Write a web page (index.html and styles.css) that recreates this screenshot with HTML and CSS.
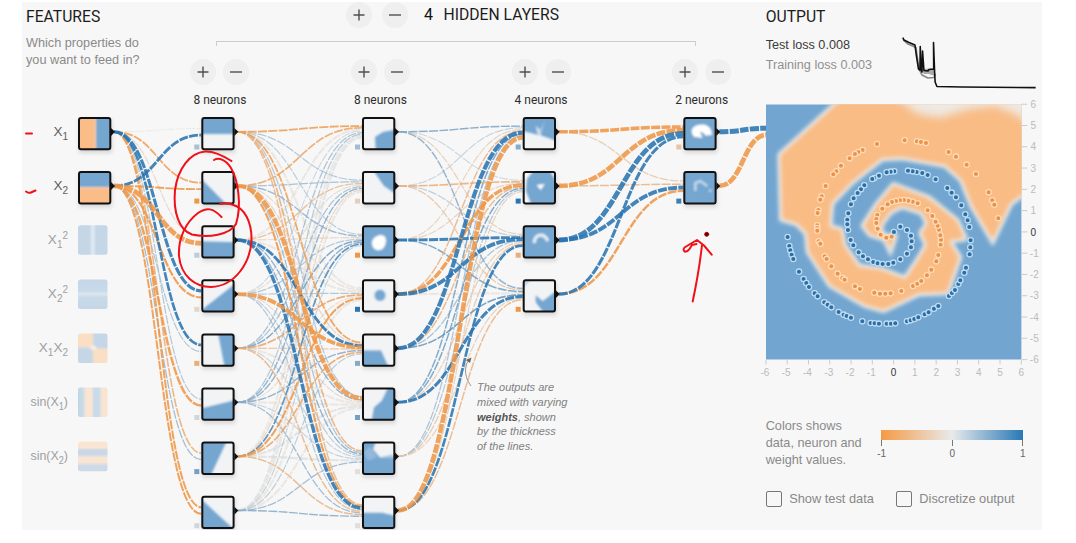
FILE: index.html
```html
<!DOCTYPE html>
<html lang="en">
<head>
<meta charset="utf-8">
<title>Neural network playground</title>
<link rel="stylesheet" href="styles.css">
</head>
<body>
<main class="playground">
  <svg class="network" id="network" viewBox="22 2 1020 528" width="1020" height="528"></svg>

  <section class="features">
    <h2 class="title">FEATURES</h2>
    <p class="hint">Which properties do<br>you want to feed in?</p>
  </section>

  <section class="hidden">
    <div class="layer-head">
      <span class="btn"><svg viewBox="0 0 12 12"><path d="M6 0.5v11M0.5 6h11"/></svg></span>
      <span class="btn"><svg viewBox="0 0 12 12"><path d="M0 6h12"/></svg></span>
      <span class="count">4</span>
      <h2 class="title">HIDDEN LAYERS</h2>
    </div>
    <div class="bracket"></div>
    <div class="layers" id="layers"></div>
    <p class="callout">The outputs are<br>mixed with varying<br><b>weights</b>, shown<br>by the thickness<br>of the lines.</p>
  </section>

  <section class="output">
    <div class="output-head">
      <div>
        <h2 class="title">OUTPUT</h2>
        <p class="loss test">Test loss 0.008</p>
        <p class="loss">Training loss 0.003</p>
      </div>
      <svg class="chart" viewBox="0 0 140 56" width="140" height="56">
        <path class="train" d="M1.500 4L6 8L14 11.500L17 33L20 39L26 42L32 41.500L33.500 38"/>
        <path class="fuzz" d="M17.500 33L33 32.500L33 40L27 38L22 38Z"/>
        <path class="test" d="M.8 1.500L2 4L7 6.500L13 9L14.500 20L16.500 33L18 34L18.300 10.500L19.200 34L20 36L20.600 15L22 34.500L26 35L27 33.500L31.800 33L31.600 6.500L32.700 36L33.200 46L35 50.500L60 51L134 51.700"/>
      </svg>
    </div>
    <svg class="heatmap" id="heatmap" viewBox="765.700 100 276 285" width="276" height="285"></svg>
    <div class="legend">
      <p class="hint">Colors shows<br>data, neuron and<br>weight values.</p>
      <div class="scale">
        <div class="bar"></div>
        <div class="ticks"><i></i><i></i><i></i></div>
        <div class="nums"><span>-1</span><span>0</span><span>1</span></div>
      </div>
    </div>
    <div class="options">
      <label><span class="box"></span>Show test data</label>
      <label><span class="box"></span>Discretize output</label>
    </div>
  </section>

  <svg class="ink" viewBox="22 2 1020 528" width="1020" height="528">
    <path d="M26 133.500H32M26 191.500Q29 193.500 31 192.500T35.500 190.500"/>
    <path d="M231.500 161C222 155 213 151 205 151.500C190 153 178 168 175 190C173 212 179 230 192 234.500C208 238 230 235 236 224C242 205 238 180 231 168C226 160 219 157 214 160"/>
    <path d="M221.500 217C213 208 207 207 198 213C186 222 178 238 179 256C181 276 195 287 211 287C236 286 250 262 251.500 241C252 222 245 208 232 204.500C228 203 224 203 220 204"/>
    <path d="M692.700 301.500C697 281 700 263 702 245M711.700 254.700L704 245.500L697 240L691 243.500L684.500 247.500Q682.500 250 685 251.800Q688 251.500 689.500 249L692 245L696.500 244"/>
    <circle cx="706.700" cy="234.300" r="2"/>
  </svg>
</main>
<script src="app.js"></script>
</body>
</html>
```
FILE: styles.css
```css
body { margin: 0; background: #fff; font-family: "Liberation Sans", Arial, sans-serif; }
p, h2 { margin: 0; }

.playground {
  position: relative;
  display: grid;
  grid-template-columns: 168px 575.7px 276.3px;
  width: 1020px;
  height: 528px;
  margin: 2px 0 0 22px;
  background: #f7f7f7;
  overflow: hidden;
}
.network, .ink { position: absolute; left: 0; top: 0; }
.features, .hidden, .output { position: relative; }

.title { font: 400 15.7px/18px Roboto, sans-serif; color: #1c1c1c; white-space: nowrap; }
.hint { font-size: 12.7px; line-height: 17px; color: #8a8a8a; white-space: nowrap; }

.features { padding: 6px 0 0 4px; }
.features .hint { margin-top: 9px; }

.layer-head { display: flex; align-items: center; height: 26px; padding-left: 156px; }
.btn {
  display: flex; align-items: center; justify-content: center;
  width: 26px; height: 26px; border-radius: 50%; background: #efefef;
}
.btn svg { width: 12px; height: 12px; fill: none; stroke: #505050; stroke-width: 1.4; }
.layer-head .btn + .btn { margin-left: 10px; }
.count { width: 19.500px; margin-left: 16px; font: 400 16px/18px Roboto, sans-serif; color: #111; }
.bracket { width: 478px; height: 4px; margin: 13px 0 0 26px; border: 1px solid #ccc; border-bottom: 0; }
.layers { display: flex; gap: 101.6px; margin: 13px 0 0 0.4px; }
.layer { flex: none; width: 59px; }
.layer .row { display: flex; justify-content: space-between; }
.layer p { margin-top: 6.5px; text-align: center; font: 400 12px/17px Roboto, sans-serif; color: #2c2c2c; white-space: nowrap; }
.callout {
  position: absolute; left: 287px; top: 378px;
  font-size: 11px; line-height: 14.8px; font-style: italic; color: #808080; white-space: nowrap;
}
.callout b { color: #555; }

.output { padding-top: 6px; }
.output-head { display: flex; height: 92px; }
.output-head > div { width: 137px; }
.loss { font-size: 12.65px; line-height: 20px; color: #909090; white-space: nowrap; }
.loss.test { margin-top: 9px; color: #3a3a3a; }
.chart { margin-top: 28px; fill: none; stroke-linejoin: round; }
.chart .test { stroke: #111; stroke-width: 1.6; }
.chart .train { stroke: #888; stroke-width: 1.6; }
.chart .fuzz { fill: #777; opacity: .6; }
.heatmap { display: block; overflow: visible; }

.legend { display: flex; height: 51px; margin-top: 33px; }
.legend .hint { width: 115.500px; }
.scale { width: 142px; padding-top: 12px; }
.bar { height: 10px; background: linear-gradient(90deg, #f59a44, #e8eaeb 50%, #2878b5); }
.ticks { display: flex; justify-content: space-between; height: 6px; }
.ticks i { width: 1px; background: #777; }
.nums { display: flex; justify-content: space-between; margin: 2px -4px 0; font-size: 10px; line-height: 12px; color: #666; }
.nums span { width: 9px; text-align: center; }
.options { display: flex; gap: 22px; margin-top: 21px; font-size: 12.8px; line-height: 18px; color: #888; }
.options label { display: flex; align-items: center; white-space: nowrap; }
.box { box-sizing: border-box; width: 16px; height: 16px; margin-right: 7.5px; border: 1.500px solid #777; border-radius: 2px; }

.link { fill: none; stroke-dasharray: 9 1.3; }
.frame { fill: none; stroke: #111; stroke-width: 2; }
.shadow { fill: #999; opacity: .35; filter: blur(2px); }
.label { font-size: 13.5px; fill: #a0a0a0; text-anchor: end; }
.label.on { fill: #606060; }
.label .small { font-size: 10px; }
.axis { font-size: 10px; fill: #bbb; text-anchor: middle; }
.axis.zero { fill: #333; }
.tick { stroke: #ccc; }
.ink { fill: none; stroke: #f01018; stroke-width: 2; stroke-linecap: round; stroke-linejoin: round; pointer-events: none; }
.ink circle { fill: #600; stroke: #a00; stroke-width: 1; }
```
FILE: app.js
```js
const BLUE = '#75a6d0', PALE = '#f2f3f5', PEACH = '#fbbd87';
const mix = (a, b, t) => a.map((v, i) => Math.round(v + (b[i] - v) * t));
function tone(w) {
  const t = Math.min(1, Math.abs(w));
  return `rgb(${mix([225, 226, 226], w < 0 ? [239, 151, 72] : [42, 116, 176], t)})`;
}

const colX = [78, 201.300, 362, 522.700, 683.300];
const rowY = i => 117 + 54.1 * i;

// Link weights, one row per source node and one column per target node.
const weights = [
  [[.03, -.9, -.2, 2.2, 1.8, .3, -.7, -1.1],
   [2, -1, -4, -1.3, .3, -1.6, .4, -1.1]],
  [[-.9, .3, .25, -.1, -.9, .3, -.7, -.6],
   [-.8, .35, .45, -.15, -.25, -3.5, .35, -1.2],
   [-.1, -.5, -.2, -.1, 2, .5, .5, 2.5],
   [.15, -.15, .3, .3, -3, -.2, .25, .3],
   [.35, .35, .6, -.8, -.4, -.1, .2, -.6],
   [.3, .5, .5, -.15, .5, -.1, .2, .4],
   [-.1, -.25, .8, -1.1, -.8, .1, .1, -.6],
   [.08, -.12, .2, -.1, .25, -.1, .4, .5]],
  [[.55, .15, -.3, .5],
   [.2, -.7, .25, -.4],
   [-.25, -.25, 2, .6],
   [-.6, -2.6, 3, -.1],
   [3.3, -.6, .35, .7],
   [.6, .6, -.3, 2.2],
   [.35, .3, -.4, -.3],
   [-3.7, -.3, 1.8, -.6]],
  [[-2.7, -.35], [-3.8, -.6], [4, 3], [2.2, -1.6]],
  [[4.2], [-4]]
];

const full = c => `<rect x="-4" y="-4" width="41" height="41" fill="${c}"/>`;
const poly = (pts, c = BLUE) => `<polygon points="${pts}" fill="${c}"/>`;
const columns = [
  [poly('-4,-4 17.5,-4 17.5,37 -4,37', PEACH) + poly('18,-4 37,-4 37,37 18,37'),
   poly('-4,-4 37,-4 37,16 -4,16') + poly('-4,16.5 37,16.5 37,37 -4,37', PEACH)],
  [poly('-4,-4 37,-4 37,17 -4,17'),
   poly('-4,4 29,37 -4,37'),
   poly('-4,16 37,17 37,37 -4,37'),
   poly('0,31 37,2 37,37 -4,37'),
   poly('16,-4 37,-4 37,37 24,37'),
   poly('-4,22 37,12 37,37 -4,37'),
   poly('-4,-4 27,-4 8,37 -4,37'),
   poly('-4,0 32,33 32,37 -4,37')],
  [poly('13,20 21,15 37,12 37,37 14,37'),
   poly('9,-4 37,-4 37,24 31,21 22,15'),
   full(BLUE) + '<path d="M10 18Q10 12 17 10Q24 9 24 16Q23 25 16 25Q10 24 10 18" fill="#fff"/>',
   '<circle cx="18" cy="16" r="5.500" fill="#75a6d0"/>',
   poly('-4,17 19,17 28,37 -4,37'),
   poly('9,37 12,20 20,13 28,-4 37,-4 37,37'),
   poly('-4,-4 15,-4 11,8 18,16 37,15 37,37 -4,37') + '<path d="M2 11L8 5L15 16L6 19Z" fill="#93b9da"/><path d="M33 17L18 16L30 13Z" fill="#a8c5de"/>',
   poly('-4,17 20,17 37,21 37,37 -4,37')],
  [poly('-4,-4 37,-4 37,25 20,19 0,14') + '<path d="M13 9L15 17L19 19L17 12Z" fill="#d0e0ed"/><path d="M22 4L17 14L19 15Z" fill="#a8c8e2"/>',
   full(BLUE) + '<path d="M-3-3H13L4 8L3 20L10 37H-3ZM37-3L26-2L35 12Z" fill="#f4f5f6"/><path d="M14 14L22 13L18 19Z" fill="#fff"/>',
   full(BLUE) + '<path d="M11.500 18Q12 9 20 10Q24 12 25 16" fill="none" stroke="#e4eef6" stroke-width="3.200"/>',
   '<path d="M0 0H9L0 9Z" fill="#bcd2e5"/>' + poly('13,16 20,22 37,9 37,37 24,37 13,23')],
  [full(BLUE) + '<path d="M11 19Q6 12 14 9Q26 6 28 17L23 18Q18 12 16 15L18 20Z" fill="#fff" stroke="#fff" stroke-width="1.500"/>',
   full(BLUE) + '<path d="M12 20V12L17 10L24 15M26 19L28 20" fill="none" stroke="#c3d9ea" stroke-width="2.500"/>']
];
const bias = [null,
  [.3, -1, .2, -.15, -.7, .1, .6, .1],
  [.35, -.25, -1, 1, .5, .6, -.05, -.05],
  [.5, 1, -.7, -1],
  [-.4, .9]];

let out = `<defs><clipPath id="cell"><rect width="31" height="31" x="1" y="1" rx="2"/></clipPath>
  <filter id="smooth" filterUnits="userSpaceOnUse" x="-6" y="-6" width="45" height="45"><feGaussianBlur stdDeviation="1.200"/></filter></defs>`;

// Faint, inactive inputs.
const faint = [
  [[0, '#c5d7e7'], [.38, '#c5d7e7'], [.5, '#e3eaf2'], [.62, '#c5d7e7'], [1, '#c5d7e7']],
  [[0, '#c5d7e7'], [.38, '#c8d9e8'], [.5, '#dce6ef'], [.62, '#c8d9e8'], [1, '#c5d7e7']],
  null,
  [[0, '#bfd5e6'], [.16, '#cbdce9'], [.28, '#f8e5d3'], [.46, '#f8e5d3'], [.55, '#c9daea'], [.7, '#c9daea'], [.82, '#f8e5d3'], [1, '#f9e3d0']],
  [[0, '#fae4d1'], [.2, '#f8e5d3'], [.3, '#c9d8e8'], [.43, '#c9d8e8'], [.54, '#f8e5d3'], [.7, '#f8e5d3'], [.82, '#ccdae7'], [1, '#ccdae7']]
];
faint.forEach((stops, i) => {
  const y = 225.300 + 54.1 * i;
  const vertical = i === 1 || i === 4;
  if (stops) {
    out += `<linearGradient id="f${i}" x2="${vertical ? 0 : 1}" y2="${vertical ? 1 : 0}">` +
      stops.map(s => `<stop offset="${s[0]}" stop-color="${s[1]}"/>`).join('') + '</linearGradient>' +
      `<rect x="78" y="${y}" width="29.500" height="29.500" rx="2.500" fill="url(#f${i})"/>`;
  } else {
    out += `<clipPath id="quad"><rect width="29.500" height="29.500" rx="2.500"/></clipPath>
      <g transform="translate(78 ${y})" clip-path="url(#quad)"><g filter="url(#smooth)"><rect x="-5" y="-5" width="40" height="40" fill="#fbdfc5"/>
      <path d="M15-5H35V15H18L15 11ZM-5 14H11L15 18V35H-5Z" fill="#c5d7e7"/><path d="M12 13L17 12L19 16L14 16Z" fill="#f4efec"/></g></g>`;
  }
});

const x = '<tspan>X</tspan>';
const sub = n => `<tspan class="small" dy="4">${n}</tspan>`;
[x + sub(1), x + sub(2),
 x + sub(1) + '<tspan class="small" dy="-9">2</tspan>',
 x + sub(2) + '<tspan class="small" dy="-9">2</tspan>',
 x + sub(1) + '<tspan dy="-4">X</tspan>' + sub(2),
 'sin(X' + sub(1) + '<tspan dy="-4">)</tspan>',
 'sin(X' + sub(2) + '<tspan dy="-4">)</tspan>'
].forEach((t, i) => {
  const fit = i > 4 ? ' textLength="37.500" lengthAdjust="spacingAndGlyphs"' : '';
  out += `<text class="label${i < 2 ? ' on' : ''}"${fit} x="68" y="${135.600 + 54.1 * i}">${t}</text>`;
});

// Links between consecutive columns.
weights.forEach((layer, l) => {
  const n = layer.length;
  const links = [];
  layer.forEach((row, s) => row.forEach((w, t) => links.push([w, s, t])));
  links.sort((a, b) => Math.abs(a[0]) - Math.abs(b[0]));
  links.forEach(([w, s, t]) => {
    const last = l === 4;
    const sx = colX[l] + 36, sy = rowY(s) + 14.8;
    const tx = last ? 767 : colX[l + 1];
    const ty = (last ? 131.500 : rowY(t) + 14.8) + (s - (n - 1) / 2) / n * 13;
    const m = (sx + tx) / 2;
    const a = Math.abs(w);
    const width = a < .13 && a > .04 ? 2.2 : .9 + .98 * a;
    out += `<path class="link" d="M${sx} ${sy}C${m} ${sy} ${m} ${ty} ${tx} ${ty}" stroke="${tone(w)}" stroke-width="${width}" opacity="${a < .13 ? .55 : .88}"/>`;
  });
});

// Nodes with their heatmap thumbnails.
columns.forEach((col, c) => col.forEach((art, r) => {
  const px = colX[c], py = rowY(r);
  if (bias[c]) out += `<rect x="${px - 7}" y="${py + 27.500}" width="5" height="5" fill="${tone(bias[c][r])}"/>`;
  out += `<rect class="shadow" x="${px + 1}" y="${py + 3}" width="33" height="33"/>
    <g transform="translate(${px} ${py})"><g clip-path="url(#cell)">${full(PALE)}<g filter="url(#smooth)">${art}</g></g>
    <rect class="frame" x="1" y="1" width="31.300" height="31.300" rx="2"/><path d="M33 11L37 14.800L33 19Z" fill="#111"/></g>`;
}));

out += '<path d="M471 386Q465 378 465.500 369Q466 363 469 360" fill="none" stroke="#999"/><path d="M466 360L471.500 357.500L470 363Z" fill="#666"/>';
document.getElementById('network').innerHTML = out;

document.getElementById('layers').innerHTML = [8, 8, 4, 2].map(n =>
  `<div class="layer"><div class="row">
    <span class="btn"><svg viewBox="0 0 12 12"><path d="M6 0.500v11M0.500 6h11"/></svg></span>
    <span class="btn"><svg viewBox="0 0 12 12"><path d="M0 6h12"/></svg></span>
  </div><p>${n} neurons</p></div>`).join('');

// Output map, drawn on a grid three times finer than the page.
const region = '250,20 75,180 80,372 125,385 155,415 160,470 225,570 330,630 385,645 490,595 575,592 612,487 580,437 628,430 605,378 520,310 415,270 365,330 325,392 345,418 390,432 405,465 418,425 398,425 378,418 375,390 405,350 440,333 500,352 518,385 498,415 515,450 485,500 450,552 380,525 310,515 265,450 258,405 222,395 228,325 290,260 380,190 440,187 570,210 620,255 650,330 712,436 765,325 820,285 820,10 260,10';
const orange = '365,147 448,136 485,139 497,141 512,144 580,171 602,185 634,209 662,237 700,292 711,316 717,329 729,370 322,165 309,171 299,177 283,190 257,212 243,229 234,238 211,273 199,304 195,314 189,345 187,354 186,391 186,399 186,407 190,439 195,446 208,484 214,492 228,514 247,536 261,549 268,554 299,574 314,582 357,593 374,596 390,596 406,595 438,588 473,573 486,566 498,558 515,541 528,524 543,499 549,480 556,449 557,434 555,421 551,404 547,392 541,380 531,363 517,346 487,325 472,320 459,317 446,315 434,316 422,318 410,321 397,328 381,341 366,360 363,372 363,384 367,401 376,419 393,428 409,425';
const blue = '97,426 102,453 105,466 109,479 114,492 131,530 145,552 153,564 161,576 178,595 187,604 207,622 217,629 228,637 250,651 265,659 274,663 287,668 321,679 346,684 358,685 371,686 394,686 407,686 420,685 455,679 466,676 477,672 489,667 508,658 520,652 536,641 549,633 581,603 590,594 599,585 609,567 615,556 627,533 632,518 643,478 645,457 646,436 642,396 637,376 630,358 618,331 602,307 589,293 576,279 541,253 517,240 501,234 484,231 472,229 458,227 417,229 406,230 394,232 371,242 357,249 351,252 327,271 317,283 307,294 295,310 287,328 279,355 276,374 276,388 278,405 286,435 294,451 310,472 323,484 338,493 354,501 367,505 382,507 399,507 414,503 435,493 455,476 467,457 469,439 467,422 455,405 435,395 416,411';
const dots = (list, c, halo) => list.split(' ').map(p => {
  const [cx, cy] = p.split(',');
  return `<circle cx="${cx}" cy="${cy}" r="8" fill="${c}" stroke="${halo}" stroke-width="3.800"/>`;
}).join('');
let map = `<defs><clipPath id="plot"><rect x="32" y="28" width="767" height="766"/></clipPath>
  <filter id="soft" x="-5%" y="-5%" width="110%" height="110%"><feGaussianBlur stdDeviation="6"/></filter>
  <filter id="haze" x="-20%" y="-100%" width="140%" height="300%"><feGaussianBlur stdDeviation="12"/></filter></defs>
  <g transform="translate(755 95) scale(.33333)"><g clip-path="url(#plot)"><rect x="32" y="28" width="767" height="766" fill="#72a5cf"/>
  <polygon points="${region}" fill="#eee9e4" stroke="#e9edf0" stroke-width="17" filter="url(#soft)"/>
  <polygon points="${region}" fill="#f9bc85" filter="url(#soft)"/>
  <path d="M415 0L485 56L555 68L640 42L720 32L790 62L840 110V-30H415Z" fill="#eeebe8" opacity=".95" filter="url(#haze)"/></g>
  ${dots(orange, '#ed9146', '#fddcba')}${dots(blue, '#256fab', '#c3dbef')}</g>`;
for (let v = -6; v <= 6; v++) {
  const px = 893.300 + v * 21.28, py = 231.900 - v * 21.28, z = v === 0 ? ' zero' : '';
  map += `<path class="tick" d="M${px} 360V364.500M1021.500 ${py}H1027"/>
    <text class="axis${z}" x="${px - (v < 0 ? 1 : 0)}" y="376">${v}</text><text class="axis${z}" x="${v < 0 ? 1034 : 1033}" y="${py + 3.600}">${v}</text>`;
}
document.getElementById('heatmap').innerHTML = map;
```
